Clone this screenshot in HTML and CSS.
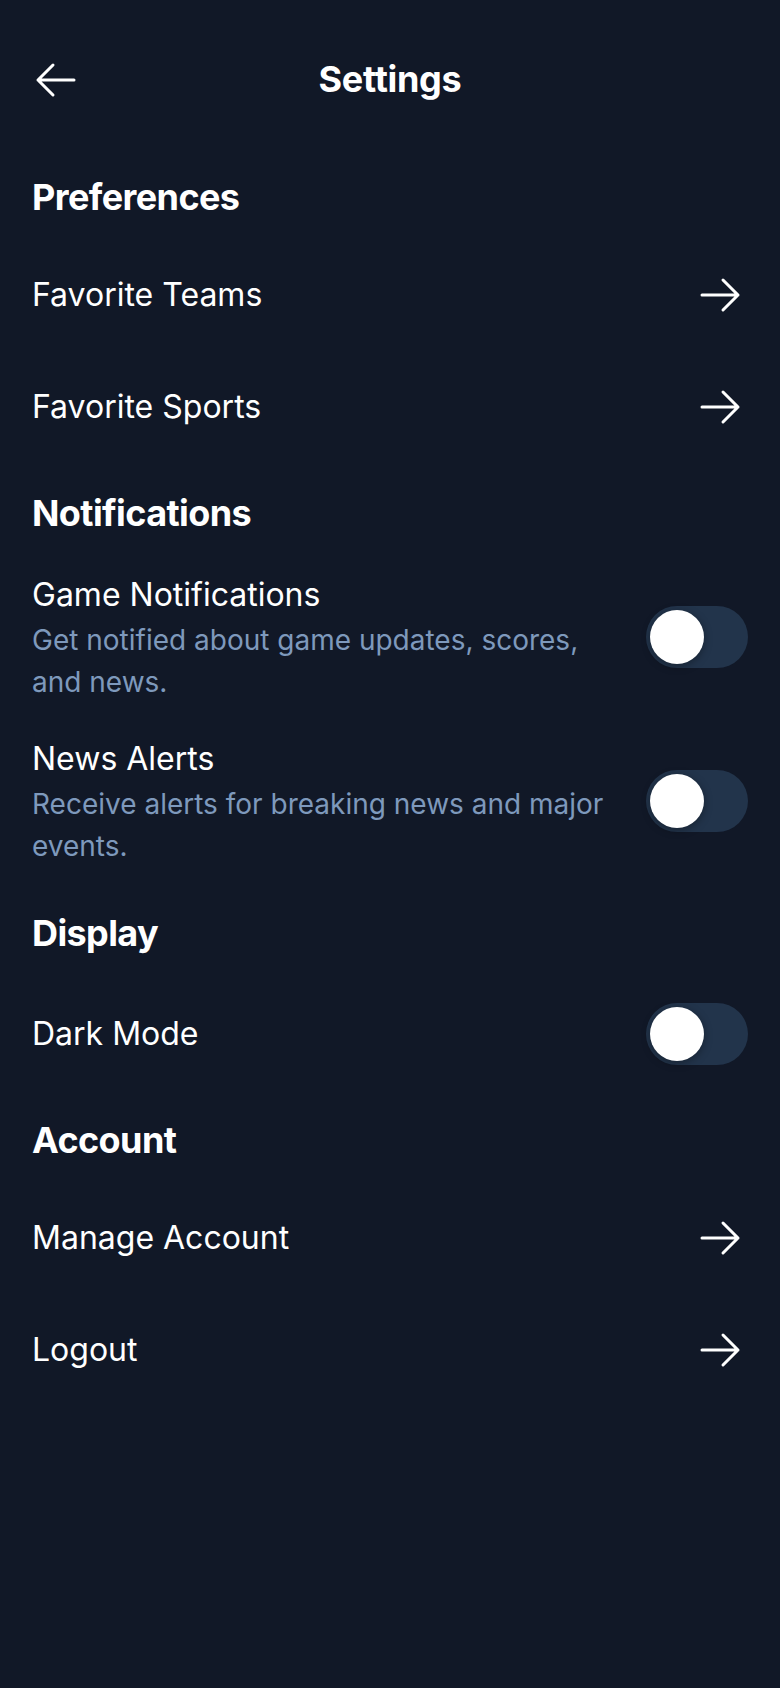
FILE: index.html
```html
<!DOCTYPE html>
<html lang="en">
<head>
<meta charset="utf-8">
<title>Settings</title>
<link rel="stylesheet" href="styles.css">
</head>
<body>
<div class="screen">
  <header class="topbar">
    <button class="icon-btn back" aria-label="Back">
      <svg viewBox="0 0 24 24" width="48" height="48" fill="none" stroke="currentColor" stroke-width="1.5" stroke-linecap="round" stroke-linejoin="round"><path d="M10.5 19.5 3 12m0 0 7.5-7.5M3 12h18"/></svg>
    </button>
    <h1 class="title">Settings</h1>
    <span class="spacer"></span>
  </header>

  <section class="section">
    <h2 class="section-title">Preferences</h2>
    <div class="row link-row"><span class="row-label">Favorite Teams</span>
      <svg class="chev" viewBox="0 0 24 24" width="48" height="48" fill="none" stroke="currentColor" stroke-width="1.5" stroke-linecap="round" stroke-linejoin="round"><path d="M13.5 4.5 21 12m0 0-7.5 7.5M21 12H3"/></svg>
    </div>
    <div class="row link-row"><span class="row-label">Favorite Sports</span>
      <svg class="chev" viewBox="0 0 24 24" width="48" height="48" fill="none" stroke="currentColor" stroke-width="1.5" stroke-linecap="round" stroke-linejoin="round"><path d="M13.5 4.5 21 12m0 0-7.5 7.5M21 12H3"/></svg>
    </div>
  </section>

  <section class="section">
    <h2 class="section-title">Notifications</h2>
    <div class="row toggle-row">
      <div class="row-text">
        <span class="row-label">Game Notifications</span>
        <p class="row-desc">Get notified about game updates, scores, and news.</p>
      </div>
      <span class="switch"><span class="knob"></span></span>
    </div>
    <div class="row toggle-row">
      <div class="row-text">
        <span class="row-label">News Alerts</span>
        <p class="row-desc">Receive alerts for breaking news and major events.</p>
      </div>
      <span class="switch"><span class="knob"></span></span>
    </div>
  </section>

  <section class="section">
    <h2 class="section-title">Display</h2>
    <div class="row single-toggle">
      <span class="row-label">Dark Mode</span>
      <span class="switch"><span class="knob"></span></span>
    </div>
  </section>

  <section class="section">
    <h2 class="section-title">Account</h2>
    <div class="row link-row"><span class="row-label">Manage Account</span>
      <svg class="chev" viewBox="0 0 24 24" width="48" height="48" fill="none" stroke="currentColor" stroke-width="1.5" stroke-linecap="round" stroke-linejoin="round"><path d="M13.5 4.5 21 12m0 0-7.5 7.5M21 12H3"/></svg>
    </div>
    <div class="row link-row"><span class="row-label">Logout</span>
      <svg class="chev" viewBox="0 0 24 24" width="48" height="48" fill="none" stroke="currentColor" stroke-width="1.5" stroke-linecap="round" stroke-linejoin="round"><path d="M13.5 4.5 21 12m0 0-7.5 7.5M21 12H3"/></svg>
    </div>
  </section>
</div>
</body>
</html>
```

FILE: styles.css
```css
* { box-sizing: border-box; }
html, body {
  margin: 0;
  padding: 0;
  background: #111827;
}
body {
  font-family: Inter, "Noto Sans", "Liberation Sans", sans-serif;
  color: #ffffff;
  min-height: 1688px;
}
.screen {
  padding: 0 32px;
}
.topbar {
  height: 158px;
  display: grid;
  grid-template-columns: 48px 1fr 48px;
  align-items: center;
}
.icon-btn {
  background: none;
  border: 0;
  padding: 0;
  color: #ffffff;
  width: 48px;
  height: 48px;
  display: flex;
  margin-top: 2px;
}
.title {
  margin: 0;
  text-align: center;
  font-size: 36px;
  font-weight: 700;
  line-height: 48px;
  letter-spacing: -0.3px;
}
.section {
  padding-top: 22px;
}
.section:first-of-type {
  padding-top: 11px;
}
.section-title {
  margin: 0 0 14px;
  font-size: 36px;
  font-weight: 700;
  line-height: 56px;
  letter-spacing: -0.6px;
}
.row {
  display: flex;
  align-items: center;
  justify-content: space-between;
}
.row-label {
  font-size: 32px;
  line-height: 48px;
  font-weight: 400;
}
.link-row {
  padding: 32px 0;
}
.chev {
  color: #ffffff;
  margin: -20px 4px -20px 0;
}
.toggle-row {
  padding: 16px 0;
  gap: 24px;
}
.row-text {
  display: flex;
  flex-direction: column;
  flex: 1;
}
.row-desc {
  margin: 0;
  font-size: 28px;
  line-height: 42px;
  color: #7e99bc;
}
.single-toggle {
  padding: 28px 0 25px;
}
.switch {
  flex: none;
  width: 102px;
  height: 62px;
  border-radius: 31px;
  background: #22344b;
  display: flex;
  align-items: center;
  padding: 0 4px;
}
.knob {
  width: 54px;
  height: 54px;
  border-radius: 50%;
  background: #ffffff;
  box-shadow: 0 2px 8px rgba(0, 0, 0, 0.35);
}
```
